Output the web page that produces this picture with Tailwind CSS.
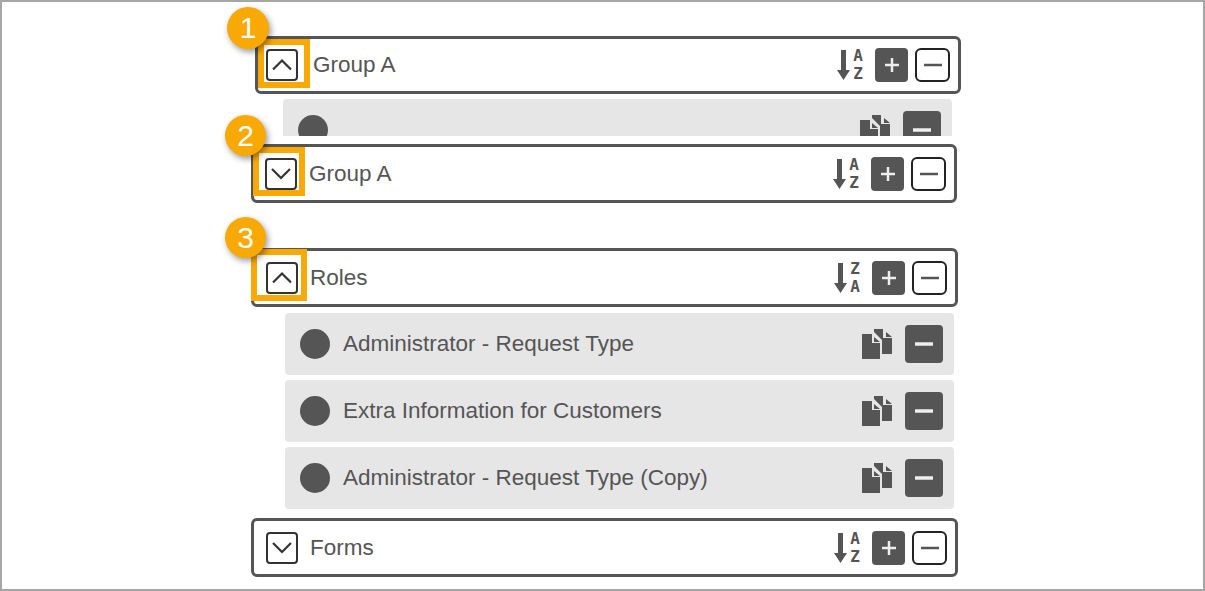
<!DOCTYPE html>
<html lang="en">

<head>
    <meta charset="UTF-8" />
    <meta name="viewport" content="width=device-width, initial-scale=1.0" />
    <title>Groups</title>
    <script src="https://cdn.jsdelivr.net/npm/@tailwindcss/browser@4"></script>
</head>

<body class="bg-white">
    <svg class="hidden">
        <symbol id="up" viewBox="0 0 28 28"><path d="M5 18.500 L14 9.500 L23 18.500" fill="none" stroke="#333" stroke-width="2.200" /></symbol>
        <symbol id="down" viewBox="0 0 28 28"><path d="M5 9 L14 18 L23 9" fill="none" stroke="#333" stroke-width="2.200" /></symbol>
        <symbol id="arrow" viewBox="0 0 13 30"><path d="M4 0 H9 V20 L13 20 L6.500 30 L0 20 L4 20 Z" fill="#555" /></symbol>
        <symbol id="copy" viewBox="0 0 31 30">
            <path d="M0 5 H10 V14 H18 V30 H0 Z M12 8 L18 13 H12 Z" fill="#555" />
            <path d="M12 0 H21 V9 H30 V25 H20 V11 L12 3 Z M24 3 L30 8 H24 Z" fill="#555" />
        </symbol>
        <symbol id="plus" viewBox="0 0 16 16"><path d="M8 1 V15 M1 8 H15" fill="none" stroke="#eee" stroke-width="2.500" /></symbol>
        <symbol id="minus" viewBox="0 0 18 4"><path d="M0 2 H18" fill="none" stroke="#555" stroke-width="2.500" /></symbol>
        <symbol id="minus-light" viewBox="0 0 18 4"><path d="M0 2 H18" fill="none" stroke="#eee" stroke-width="3.500" /></symbol>
    </svg>

    <div class="h-[591px] border-2 border-[#a6a6a6] overflow-hidden flex flex-col font-['Liberation_Sans',Arial,sans-serif] text-[#555] text-[22.5px]">

        <!-- 1 -->
        <div class="ml-[253px] mt-[34px] w-[706px] h-[58px] relative flex items-center border-[3px] border-[#555] rounded-md pl-2 pr-2">
            <button class="w-8 h-8 flex items-center justify-center border-2 border-[#333] rounded bg-white"><svg class="w-7 h-7"><use href="#up" /></svg></button>
            <span class="ml-[15px]">Group A</span>
            <svg class="w-[13px] h-[30px] ml-auto"><use href="#arrow" /></svg>
            <div class="w-[10px] ml-[3px] mr-3 flex flex-col items-center font-['DejaVu_Sans_Mono',monospace] font-bold text-[16px] leading-[18px]"><span>A</span><span>Z</span></div>
            <button class="w-[33px] h-[34px] flex items-center justify-center rounded bg-[#555]"><svg class="w-4 h-4"><use href="#plus" /></svg></button>
            <button class="w-[35px] h-[34px] ml-[7px] flex items-center justify-center border-2 border-[#222] rounded-md"><svg class="w-[18px] h-1"><use href="#minus" /></svg></button>
            <div class="absolute left-0 top-0 w-[52px] h-[49px] border-[6px] border-[#f9a906]"></div>
            <div class="absolute left-[-31px] top-[-32px] w-[42px] h-[42px] rounded-full bg-[#f9a906] shadow-[2px_3px_6px_rgba(0,0,0,0.4)] text-white text-[30px] leading-[42px] text-center">1</div>
        </div>
        <div class="ml-[281px] mt-[5px] w-[669px] h-[37px] overflow-hidden bg-[#e6e6e6] rounded-t">
            <div class="h-[62px] flex items-center pl-[15px] pr-[11px]">
                <span class="w-[30px] h-[30px] rounded-full bg-[#555]"></span>
                <svg class="w-[31px] h-[30px] ml-auto"><use href="#copy" /></svg>
                <span class="w-[38px] h-[38px] ml-3 flex items-center justify-center rounded bg-[#555]"><svg class="w-[18px] h-1"><use href="#minus-light" /></svg></span>
            </div>
        </div>

        <!-- 2 -->
        <div class="ml-[249px] mt-2 w-[706px] h-[59px] relative flex items-center border-[3px] border-[#555] rounded-md pl-[11px] pr-2">
            <button class="w-8 h-8 flex items-center justify-center border-2 border-[#333] rounded bg-white"><svg class="w-7 h-7"><use href="#down" /></svg></button>
            <span class="ml-3">Group A</span>
            <svg class="w-[13px] h-[30px] ml-auto"><use href="#arrow" /></svg>
            <div class="w-[10px] ml-[3px] mr-3 flex flex-col items-center font-['DejaVu_Sans_Mono',monospace] font-bold text-[16px] leading-[18px]"><span>A</span><span>Z</span></div>
            <button class="w-[33px] h-[34px] flex items-center justify-center rounded bg-[#555]"><svg class="w-4 h-4"><use href="#plus" /></svg></button>
            <button class="w-[35px] h-[34px] ml-[7px] flex items-center justify-center border-2 border-[#222] rounded-md"><svg class="w-[18px] h-1"><use href="#minus" /></svg></button>
            <div class="absolute left-[-1px] top-0 w-[52px] h-[49px] border-[6px] border-[#f9a906]"></div>
            <div class="absolute left-[-29px] top-[-32px] w-[41px] h-[41px] rounded-full bg-[#f9a906] shadow-[2px_3px_6px_rgba(0,0,0,0.4)] text-white text-[30px] leading-[41px] text-center">2</div>
        </div>

        <!-- 3 -->
        <div class="ml-[249px] mt-[45px] w-[707px] h-[59px] relative flex items-center border-[3px] border-[#555] rounded-md pl-3 pr-2">
            <button class="w-8 h-8 flex items-center justify-center border-2 border-[#333] rounded bg-white"><svg class="w-7 h-7"><use href="#up" /></svg></button>
            <span class="ml-3">Roles</span>
            <svg class="w-[13px] h-[30px] ml-auto"><use href="#arrow" /></svg>
            <div class="w-[10px] ml-[3px] mr-3 flex flex-col items-center font-['DejaVu_Sans_Mono',monospace] font-bold text-[16px] leading-[18px]"><span>Z</span><span>A</span></div>
            <button class="w-[33px] h-[34px] flex items-center justify-center rounded bg-[#555]"><svg class="w-4 h-4"><use href="#plus" /></svg></button>
            <button class="w-[35px] h-[34px] ml-[7px] flex items-center justify-center border-2 border-[#222] rounded-md"><svg class="w-[18px] h-1"><use href="#minus" /></svg></button>
            <div class="absolute left-[-3px] top-[-2px] w-14 h-[52px] border-[6px] border-[#f9a906]"></div>
            <div class="absolute left-[-29px] top-[-34px] w-[41px] h-[41px] rounded-full bg-[#f9a906] shadow-[2px_3px_6px_rgba(0,0,0,0.4)] text-white text-[30px] leading-[41px] text-center">3</div>
        </div>
        <div class="ml-[283px] mt-[6px] w-[669px] flex flex-col gap-[5px]">
            <div class="h-[62px] flex items-center bg-[#e6e6e6] rounded pl-[15px] pr-[11px]">
                <span class="w-[30px] h-[30px] rounded-full bg-[#555]"></span>
                <span class="ml-[13px]">Administrator - Request Type</span>
                <svg class="w-[31px] h-[30px] ml-auto"><use href="#copy" /></svg>
                <span class="w-[38px] h-[38px] ml-3 flex items-center justify-center rounded bg-[#555]"><svg class="w-[18px] h-1"><use href="#minus-light" /></svg></span>
            </div>
            <div class="h-[62px] flex items-center bg-[#e6e6e6] rounded pl-[15px] pr-[11px]">
                <span class="w-[30px] h-[30px] rounded-full bg-[#555]"></span>
                <span class="ml-[13px]">Extra Information for Customers</span>
                <svg class="w-[31px] h-[30px] ml-auto"><use href="#copy" /></svg>
                <span class="w-[38px] h-[38px] ml-3 flex items-center justify-center rounded bg-[#555]"><svg class="w-[18px] h-1"><use href="#minus-light" /></svg></span>
            </div>
            <div class="h-[62px] flex items-center bg-[#e6e6e6] rounded pl-[15px] pr-[11px]">
                <span class="w-[30px] h-[30px] rounded-full bg-[#555]"></span>
                <span class="ml-[13px]">Administrator - Request Type (Copy)</span>
                <svg class="w-[31px] h-[30px] ml-auto"><use href="#copy" /></svg>
                <span class="w-[38px] h-[38px] ml-3 flex items-center justify-center rounded bg-[#555]"><svg class="w-[18px] h-1"><use href="#minus-light" /></svg></span>
            </div>
        </div>

        <!-- forms -->
        <div class="ml-[249px] mt-[9px] w-[707px] h-[59px] flex items-center border-[3px] border-[#555] rounded-md pl-3 pr-2">
            <button class="w-8 h-8 flex items-center justify-center border-2 border-[#333] rounded bg-white"><svg class="w-7 h-7"><use href="#down" /></svg></button>
            <span class="ml-3">Forms</span>
            <svg class="w-[13px] h-[30px] ml-auto"><use href="#arrow" /></svg>
            <div class="w-[10px] ml-[3px] mr-3 flex flex-col items-center font-['DejaVu_Sans_Mono',monospace] font-bold text-[16px] leading-[18px]"><span>A</span><span>Z</span></div>
            <button class="w-[33px] h-[34px] flex items-center justify-center rounded bg-[#555]"><svg class="w-4 h-4"><use href="#plus" /></svg></button>
            <button class="w-[35px] h-[34px] ml-[7px] flex items-center justify-center border-2 border-[#222] rounded-md"><svg class="w-[18px] h-1"><use href="#minus" /></svg></button>
        </div>
    </div>
</body>

</html>
